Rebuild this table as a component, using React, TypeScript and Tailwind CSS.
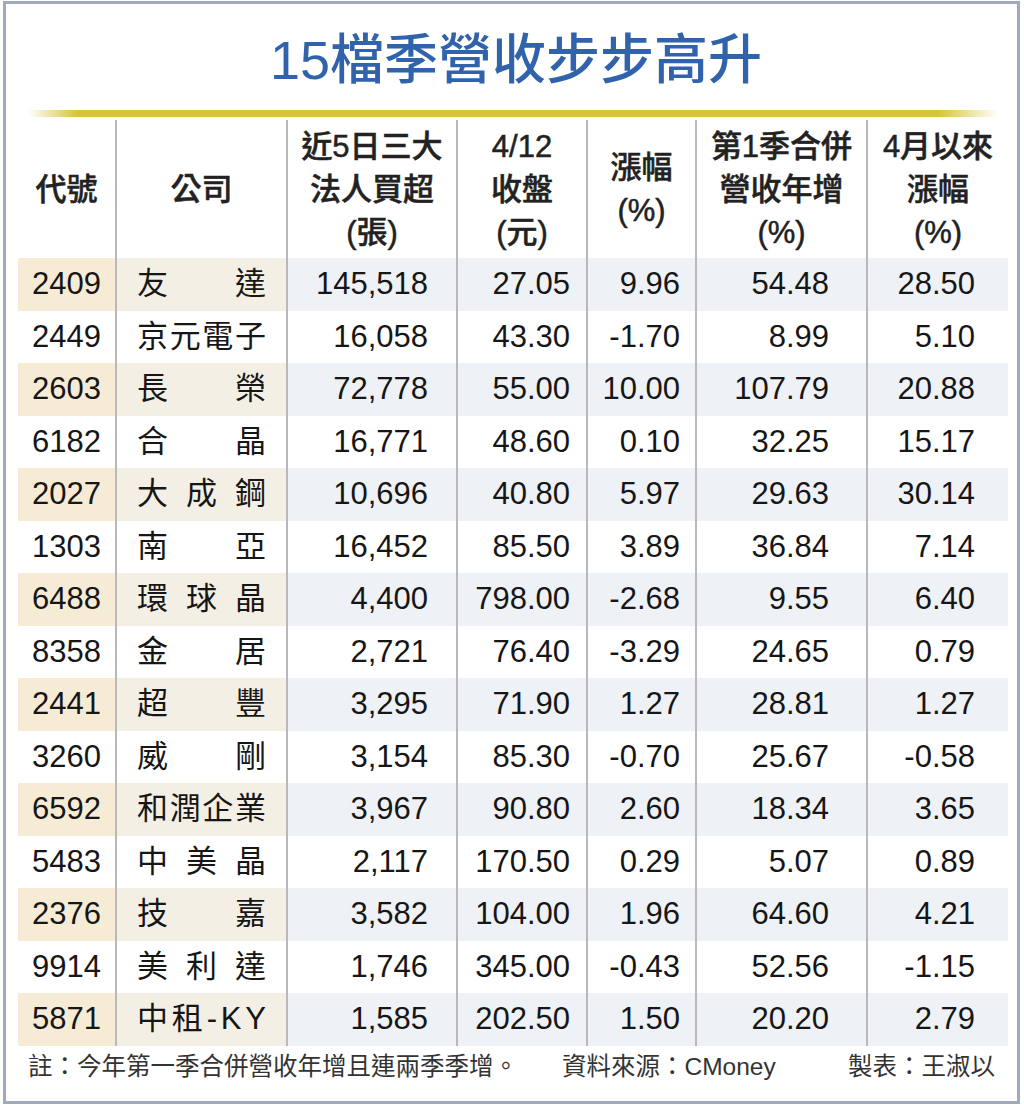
import React from 'react';

const rows: string[][] = [
  ['2409', '友達', '145,518', '27.05', '9.96', '54.48', '28.50'],
  ['2449', '京元電子', '16,058', '43.30', '-1.70', '8.99', '5.10'],
  ['2603', '長榮', '72,778', '55.00', '10.00', '107.79', '20.88'],
  ['6182', '合晶', '16,771', '48.60', '0.10', '32.25', '15.17'],
  ['2027', '大成鋼', '10,696', '40.80', '5.97', '29.63', '30.14'],
  ['1303', '南亞', '16,452', '85.50', '3.89', '36.84', '7.14'],
  ['6488', '環球晶', '4,400', '798.00', '-2.68', '9.55', '6.40'],
  ['8358', '金居', '2,721', '76.40', '-3.29', '24.65', '0.79'],
  ['2441', '超豐', '3,295', '71.90', '1.27', '28.81', '1.27'],
  ['3260', '威剛', '3,154', '85.30', '-0.70', '25.67', '-0.58'],
  ['6592', '和潤企業', '3,967', '90.80', '2.60', '18.34', '3.65'],
  ['5483', '中美晶', '2,117', '170.50', '0.29', '5.07', '0.89'],
  ['2376', '技嘉', '3,582', '104.00', '1.96', '64.60', '4.21'],
  ['9914', '美利達', '1,746', '345.00', '-0.43', '52.56', '-1.15'],
  ['5871', '中租-KY', '1,585', '202.50', '1.50', '20.20', '2.79'],
];

const headers: string[][] = [
  ['代號'],
  ['公司'],
  ['近5日三大', '法人買超', '(張)'],
  ['4/12', '收盤', '(元)'],
  ['漲幅', '(%)'],
  ['第1季合併', '營收年增', '(%)'],
  ['4月以來', '漲幅', '(%)'],
];

const titleParts = ['15', '檔', '季', '營', '收', '步', '步', '高', '升'];

// right padding of the number columns (index 2..6)
const numPad = ['', '', 'pr-[28px]', 'pr-[16px]', 'pr-[15px]', 'pr-[37px]', 'pr-[33px]'];

const divider = 'border-r-2 border-[#b9b9b9]';

export default function App() {
  return (
    <div className="w-[1024px] h-[1107px] bg-white pl-[3px] pr-[4px] pt-[1px] pb-[3px] font-['Liberation_Sans','Noto_Sans_CJK_TC',sans-serif]">
      <div className="h-full border-[3px] border-[#9eabbf] flex flex-col pl-[12px] pr-[9px]">
        <h1 className="pt-[29px] flex justify-center">
          <span className="w-[486px] flex justify-between text-[54px] leading-[54px] font-medium text-[#3063ab]">
            {titleParts.map((t, i) => (
              <span key={i}>{t}</span>
            ))}
          </span>
        </h1>
        <div className="mt-[23px] h-[7px] bg-[linear-gradient(to_right,rgba(217,196,60,0)_1%,#d8c43a_6%,#d8c43a_93%,rgba(217,196,60,0)_99%)]" />

        <div className="mt-[3px] w-[990px] grid grid-cols-[99px_171px_170px_130px_109px_171px_140px] grid-rows-[138px_repeat(15,52.5px)]">
          {headers.map((lines, i) => (
            <div
              key={'h' + i}
              className={`flex flex-col items-center justify-center text-[31px] leading-[43px] font-medium text-[#222] [-webkit-text-stroke:0.5px_#222] ${i < 6 ? divider : ''}`}
            >
              {lines.map((l) => (
                <span key={l}>{l}</span>
              ))}
            </div>
          ))}

          {rows.map((r, ri) => {
            const striped = ri % 2 === 0;
            return r.map((v, ci) => {
              let bg = '';
              if (striped) bg = ci === 0 ? 'bg-[#f6ecd6]' : ci === 1 ? 'bg-[#f4efe5]' : 'bg-[#eef1f5]';
              const base = `flex items-center text-[31px] text-[#161616] ${bg} ${ci < 6 ? divider : ''}`;
              if (ci === 0) {
                return (
                  <div key={ri + '-' + ci} className={`${base} justify-center`}>
                    {v}
                  </div>
                );
              }
              if (ci === 1) {
                return (
                  <div key={ri + '-' + ci} className={`${base} justify-between px-[20px]`}>
                    {Array.from(v).map((ch, k) => (
                      <span key={k}>{ch}</span>
                    ))}
                  </div>
                );
              }
              return (
                <div key={ri + '-' + ci} className={`${base} justify-end ${numPad[ci]}`}>
                  {v}
                </div>
              );
            });
          })}
        </div>

        <div className="h-[44px] flex items-center pl-[10px] pr-[13px] text-[24.5px] text-[#333]">
          <span>註：今年第一季合併營收年增且連兩季季增。</span>
          <span className="ml-[44px]">資料來源：CMoney</span>
          <span className="ml-auto">製表：王淑以</span>
        </div>
      </div>
    </div>
  );
}
